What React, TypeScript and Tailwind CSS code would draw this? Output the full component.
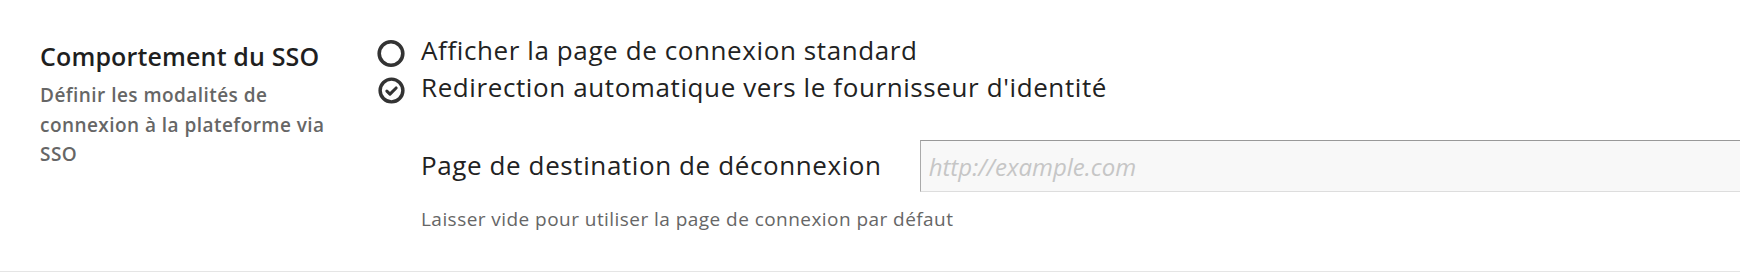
import React from "react";

const options = [
  { id: "standard", label: "Afficher la page de connexion standard" },
  { id: "redirect", label: "Redirection automatique vers le fournisseur d'identité" },
];

const RadioIcon: React.FC<{ checked: boolean }> = ({ checked }) =>
  checked ? (
    <svg width="27" height="27" viewBox="0 0 28 28" fill="none">
      <circle cx="14" cy="14" r="11.8" stroke="#333333" strokeWidth="3.6" />
      <path
        d="M9.2 14.6l3.2 3.1 6.4-6.3"
        stroke="#333333"
        strokeWidth="3.2"
        strokeLinecap="round"
        strokeLinejoin="round"
      />
    </svg>
  ) : (
    <svg width="29" height="29" viewBox="0 0 28 28" fill="none">
      <circle cx="14" cy="14" r="11.8" stroke="#333333" strokeWidth="3.6" />
    </svg>
  );

const App: React.FC = () => {
  const selected = "redirect";

  return (
    <div className="w-[1740px] h-[272px] overflow-hidden bg-white border-b border-[#e5e5e5] font-['Open_Sans',sans-serif]">
      <div className="flex items-start pl-10 pt-[32px]">
        {/* Left column: setting title + description */}
        <div className="w-[337px] shrink-0 pt-[10px]">
          <h3 className="text-[25px] leading-[29px] font-semibold tracking-[0.15px] text-[#1f1f1f]">
            Comportement du SSO
          </h3>
          <p className="mt-[10px] w-[292px] text-[19px] leading-[29.5px] font-semibold tracking-[0.45px] text-[#666666]">
            Définir les modalités de connexion à la plateforme via SSO
          </p>
        </div>

        {/* Right column: options */}
        <div className="flex-1 min-w-0">
          {options.map((opt) => (
            <label key={opt.id} className="flex items-center h-[37px] cursor-pointer">
              <span className="w-[28px] mt-[5px] flex justify-center">
                <RadioIcon checked={opt.id === selected} />
              </span>
              <span className="ml-[16px] text-[26px] leading-[37px] tracking-[0.6px] text-[#222222]">
                {opt.label}
              </span>
            </label>
          ))}

          <div className="ml-[44px] mt-[34px]">
            <div className="flex items-center gap-[38px]">
              <span className="text-[26px] leading-[1.2] tracking-[0.6px] text-[#222222] whitespace-nowrap">
                Page de destination de déconnexion
              </span>
              <input
                type="text"
                placeholder="http://example.com"
                className="w-[1000px] h-[52px] shrink-0 px-2 bg-[#f8f8f8] border border-[#dddddd] border-t-[#999999] border-l-[#aaaaaa] text-[24px] text-[#222222] placeholder:italic placeholder:text-[#c6c6c6] outline-none"
              />
            </div>
            <p className="mt-[14px] text-[19px] leading-[27px] tracking-[0.45px] text-[#666666]">
              Laisser vide pour utiliser la page de connexion par défaut
            </p>
          </div>
        </div>
      </div>
    </div>
  );
};

export default App;
